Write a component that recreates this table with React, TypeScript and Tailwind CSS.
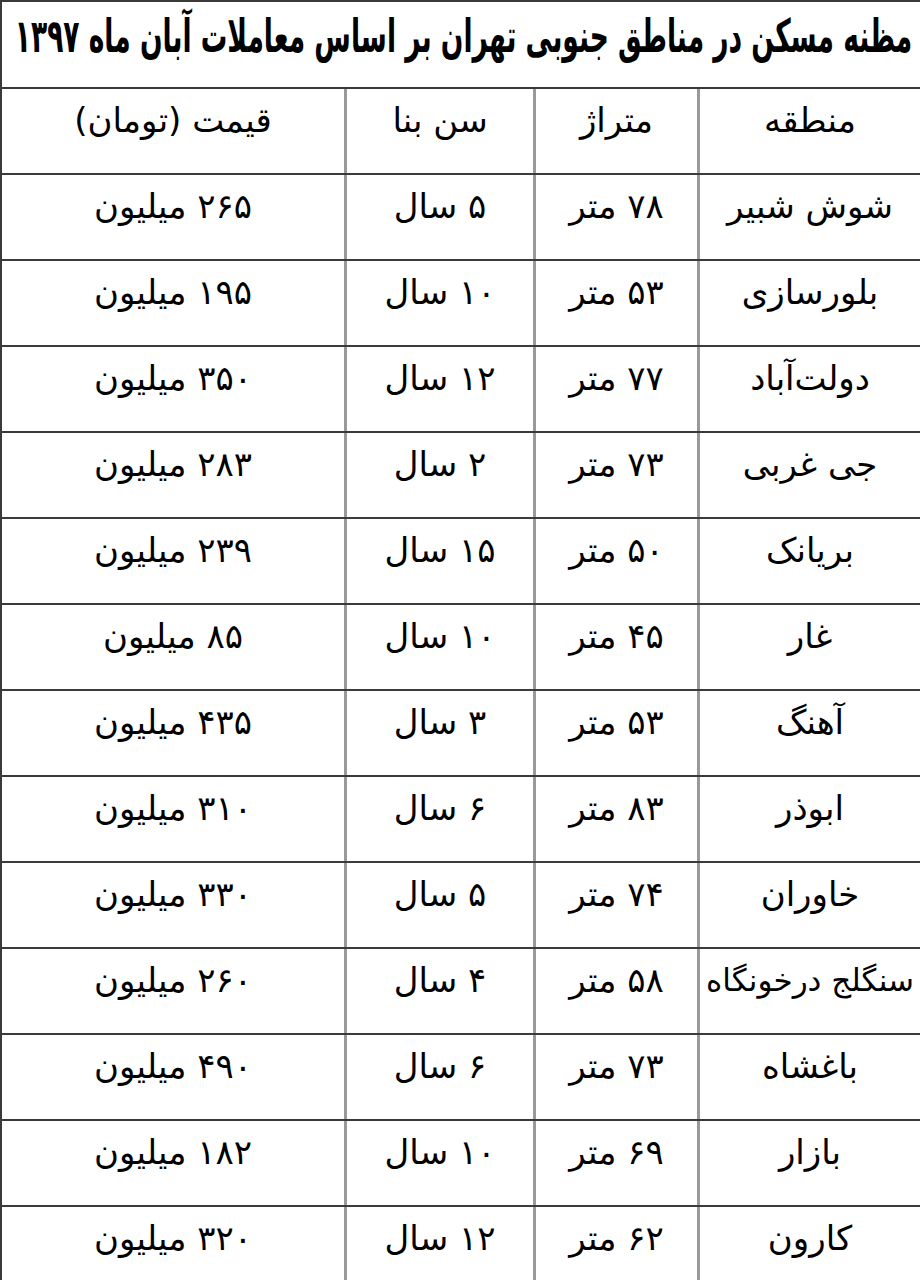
import React from 'react';

const rows = [
  ['شوش شبیر', '۷۸ متر', '۵ سال', '۲۶۵ میلیون'],
  ['بلورسازی', '۵۳ متر', '۱۰ سال', '۱۹۵ میلیون'],
  ['دولت‌آباد', '۷۷ متر', '۱۲ سال', '۳۵۰ میلیون'],
  ['جی غربی', '۷۳ متر', '۲ سال', '۲۸۳ میلیون'],
  ['بریانک', '۵۰ متر', '۱۵ سال', '۲۳۹ میلیون'],
  ['غار', '۴۵ متر', '۱۰ سال', '۸۵ میلیون'],
  ['آهنگ', '۵۳ متر', '۳ سال', '۴۳۵ میلیون'],
  ['ابوذر', '۸۳ متر', '۶ سال', '۳۱۰ میلیون'],
  ['خاوران', '۷۴ متر', '۵ سال', '۳۳۰ میلیون'],
  ['سنگلج درخونگاه', '۵۸ متر', '۴ سال', '۲۶۰ میلیون'],
  ['باغشاه', '۷۳ متر', '۶ سال', '۴۹۰ میلیون'],
  ['بازار', '۶۹ متر', '۱۰ سال', '۱۸۲ میلیون'],
  ['کارون', '۶۲ متر', '۱۲ سال', '۳۲۰ میلیون'],
];

const header = ['منطقه', 'متراژ', 'سن بنا', 'قیمت (تومان)'];

// widths from right to left
const colClass = [
  'w-[220px] shrink-0',
  'w-[164px] shrink-0 border-r-[3px] border-[#9a9a9a]',
  'w-[189px] shrink-0 border-r-[3px] border-[#9a9a9a]',
  'flex-1 border-r-[3px] border-[#9a9a9a]',
];

function Row({ cells }: { cells: string[] }) {
  return (
    <div className="flex h-[86px] border-t-2 border-[#3a3a3a]">
      {cells.map((c, i) => (
        <div
          key={i}
          className={`${colClass[i]} flex justify-center pt-[4px] whitespace-nowrap ${c.length > 12 ? 'text-[31px] pt-[7px]' : ''}`}
        >
          {c}
        </div>
      ))}
    </div>
  );
}

export default function App() {
  return (
    <div
      dir="rtl"
      className="w-[920px] h-[1280px] overflow-hidden bg-white text-black border-l-2 border-t-2 border-[#3a3a3a] text-[34px] leading-[1.6]"
      style={{ fontFamily: '"DejaVu Sans", sans-serif' }}
    >
      {/* عنوان جدول */}
      <div className="h-[85px] pr-[8px] pt-[2px] overflow-hidden">
        <span
          className="inline-block origin-right scale-x-[0.64] font-bold text-[46px] leading-[1.4] whitespace-nowrap"
          style={{ fontFamily: '"DejaVu Sans Condensed", "DejaVu Sans", sans-serif' }}
        >
          مظنه مسکن در مناطق جنوبی تهران بر اساس معاملات آبان ماه ۱۳۹۷
        </span>
      </div>
      <Row cells={header} />
      {rows.map((r, i) => (
        <Row key={i} cells={r} />
      ))}
    </div>
  );
}
